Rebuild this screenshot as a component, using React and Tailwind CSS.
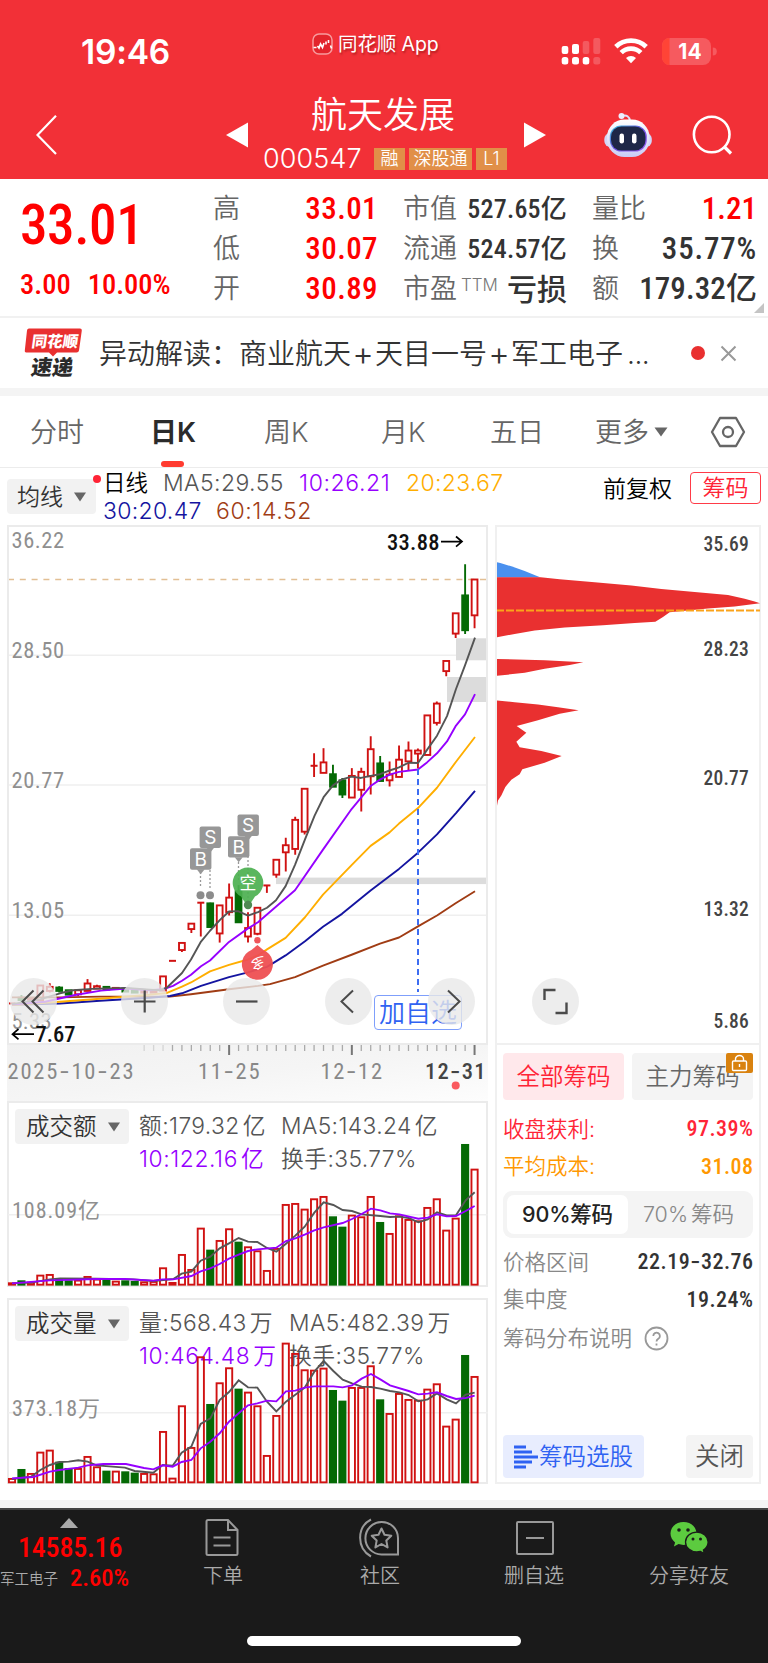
// pages/StockDetail

const SANS = "[font-family:'Inter','Noto_Sans_CJK_SC',sans-serif]";
const DIN = "[font-family:'Roboto_Condensed','Noto_Sans_CJK_SC',sans-serif]";

const RED = '#d01212';
const GREEN = '#056a05';

// candle columns are evenly spaced across the plot
const colX = (i) => 12 + i * 9.44;
const priceY = (v) => 520 + v / 2.958;

// [up, high, bodyTop, bodyBottom, low]
const candles = [
  [1, 1430, 1430, 1430, 1430],
  [0, 1405, 1413, 1420, 1425],
  [1, 1412, 1414, 1419, 1420],
  [1, 1377, 1377, 1421, 1421],
  [1, 1370, 1381, 1393, 1398],
  [0, 1379, 1383, 1393, 1398],
  [0, 1391, 1391, 1404, 1404],
  [1, 1391, 1391, 1403, 1408],
  [1, 1358, 1371, 1393, 1393],
  [1, 1375, 1379, 1386, 1386],
  [0, 1381, 1381, 1389, 1389],
  [1, 1384, 1384, 1387, 1387],
  [0, 1386, 1386, 1395, 1395],
  [0, 1392, 1392, 1398, 1398],
  [1, 1394, 1394, 1398, 1398],
  [1, 1394, 1394, 1398, 1398],
  [1, 1350, 1350, 1392, 1392],
  [1, 1304, 1304, 1304, 1304],
  [1, 1250, 1251, 1272, 1278],
  [1, 1193, 1194, 1210, 1222],
  [1, 1132, 1132, 1132, 1232],
  [0, 1132, 1134, 1204, 1204],
  [1, 1140, 1140, 1223, 1250],
  [1, 1075, 1117, 1160, 1170],
  [0, 1080, 1098, 1190, 1190],
  [1, 1160, 1207, 1232, 1250],
  [1, 1146, 1147, 1224, 1228],
  [1, 1081, 1081, 1081, 1103],
  [1, 1004, 1005, 1049, 1058],
  [1, 940, 962, 983, 1040],
  [1, 878, 887, 973, 990],
  [1, 794, 795, 922, 930],
  [1, 690, 727, 727, 760],
  [1, 675, 717, 748, 748],
  [0, 724, 752, 789, 789],
  [0, 763, 770, 812, 822],
  [1, 734, 757, 821, 821],
  [1, 733, 745, 798, 862],
  [1, 640, 678, 758, 812],
  [0, 698, 720, 772, 772],
  [1, 714, 753, 770, 788],
  [1, 667, 709, 760, 760],
  [1, 655, 682, 714, 740],
  [1, 676, 682, 691, 735],
  [1, 577, 578, 695, 695],
  [1, 537, 543, 600, 608],
  [1, 416, 417, 447, 462],
  [1, 275, 276, 336, 349],
  [0, 131, 223, 326, 337],
  [1, 175, 176, 282, 320],
];

const averages = [
  ['#a03c14', [12, 1412, 60, 1412, 100, 1410, 170, 1410, 191, 1403, 229, 1388, 258, 1378, 270, 1373, 295, 1352, 323, 1318, 351.6, 1286, 380, 1253, 399, 1235, 418, 1202, 437, 1170, 456, 1133, 475, 1098]],
  ['#1414a0', [12, 1434, 60, 1430, 100, 1422, 150, 1413, 170, 1408, 182, 1400, 201, 1378, 229, 1352, 248, 1338, 267, 1322, 285.6, 1288, 305, 1246, 323, 1203, 342, 1165, 370.6, 1096, 399, 1032, 418, 984, 437, 930, 456, 867, 475, 801]],
  ['#ffae00', [12, 1435, 60, 1425, 100, 1416, 150, 1404, 167, 1399, 182, 1380, 191, 1368, 210, 1335, 229, 1316, 248, 1300, 258, 1288, 267, 1270, 285.6, 1236, 305, 1175, 323, 1108, 351.6, 1021, 370.6, 964, 389.6, 924, 399, 898, 418, 852, 437, 792, 456, 715, 475, 642]],
  ['#9600ff', [12, 1433, 45, 1425, 75, 1405, 101, 1392, 126, 1386, 150, 1391, 163, 1388, 173, 1378, 182, 1363, 191, 1345, 201, 1320, 210, 1303, 229, 1248, 248, 1208, 258, 1190, 295, 1095, 323, 975, 351.6, 855, 370.6, 787, 380, 768, 389.6, 753, 399, 745, 418, 738, 427, 717, 437, 690, 447, 655, 456, 608, 465, 575, 475, 515]],
  ['#555555', [12, 1432, 40, 1418, 60, 1400, 73, 1391, 92, 1387, 126, 1384, 150, 1389, 160, 1391, 167, 1383, 182, 1340, 191, 1300, 201, 1247, 210, 1215, 220, 1183, 229, 1158, 238, 1157, 248, 1170, 258, 1160, 267, 1147, 276, 1125, 285.6, 1083, 295, 1020, 305, 945, 314.5, 875, 323.6, 820, 333, 785, 342, 767, 351.6, 759, 361, 763, 370.6, 757, 380, 752, 389.6, 741, 399, 732, 408.6, 718, 418, 719, 427, 680, 437, 638, 447, 580, 456, 500, 465, 430, 475, 348]],
];

const turnover = {
  base: 914,
  tops: [908, 902, 906, 885, 883, 898, 902, 900, 889, 897, 898, 903, 902, 904, 905, 904, 863, 907, 823, 868, 744, 810, 781, 746, 786, 800, 812, 871, 805, 673, 670, 687, 656, 649, 710, 741, 705, 710, 649, 727, 760, 707, 718, 722, 682, 656, 750, 714, 493, 567],
  ma5: [36, 910, 93, 908, 150, 898, 180, 895, 290, 896, 400, 898, 460, 903, 520, 897, 545, 881, 574, 875, 602, 842, 631, 830, 659, 805, 687, 790, 716, 774, 744, 785, 772, 786, 801, 804, 829, 815, 858, 791, 886, 767, 914, 740, 943, 698, 971, 667, 1000, 675, 1028, 690, 1056, 693, 1085, 703, 1141, 708, 1170, 711, 1198, 710, 1226, 714, 1255, 727, 1283, 718, 1311, 697, 1340, 706, 1368, 706, 1397, 661, 1424, 637],
  ma10: [36, 910, 150, 901, 290, 897, 375, 897, 460, 902, 488, 898, 520, 898, 574, 888, 602, 874, 631, 865, 659, 852, 687, 836, 716, 824, 744, 813, 772, 808, 829, 803, 858, 783, 886, 775, 914, 764, 943, 751, 971, 742, 1028, 729, 1056, 717, 1085, 702, 1113, 686, 1141, 691, 1170, 700, 1198, 703, 1255, 716, 1283, 713, 1311, 703, 1340, 709, 1368, 708, 1397, 693, 1424, 678],
};

const volume = {
  base: 577,
  tops: [565, 538, 550, 486, 480, 516, 535, 535, 499, 530, 543, 543, 545, 549, 550, 551, 424, 564, 347, 472, 200, 343, 278, 233, 297, 306, 347, 496, 376, 159, 190, 239, 240, 234, 301, 333, 292, 292, 227, 329, 370, 310, 328, 330, 297, 281, 408, 387, 196, 259],
  ma5: [36, 567, 93, 560, 121, 540, 150, 525, 178, 516, 206, 515, 235, 511, 263, 515, 290, 526, 375, 533, 404, 543, 460, 548, 488, 525, 518, 527, 545, 488, 574, 470, 602, 402, 631, 385, 659, 330, 687, 306, 716, 271, 744, 292, 772, 293, 801, 335, 829, 364, 858, 335, 914, 293, 943, 245, 971, 213, 1000, 243, 1028, 269, 1056, 280, 1085, 290, 1113, 291, 1141, 296, 1170, 303, 1198, 307, 1226, 315, 1255, 334, 1283, 328, 1311, 310, 1340, 328, 1368, 340, 1397, 314, 1424, 308],
  ma10: [36, 565, 100, 561, 150, 545, 178, 540, 235, 533, 263, 526, 310, 522, 378, 522, 432, 534, 460, 538, 488, 526, 518, 530, 545, 516, 574, 510, 602, 475, 631, 455, 659, 430, 687, 395, 716, 370, 744, 346, 772, 340, 801, 332, 829, 334, 858, 304, 886, 302, 914, 293, 943, 289, 1000, 289, 1028, 292, 1056, 286, 1085, 266, 1113, 252, 1141, 268, 1170, 286, 1226, 303, 1255, 313, 1283, 311, 1311, 307, 1340, 318, 1368, 327, 1397, 324, 1424, 317],
};

const chips = [
  ['#4a90ee', '26,125 37,127 70,137 110,151 158,170 26,170'],
  ['#e93030', '26,169 158,169 215,175 320,184 430,194 520,204 620,213 720,222 770,233 800,241 816,246 740,256 660,262 545,273 525,287 502,301 440,305 345,311 230,318 140,327 80,337 26,347'],
  ['#e93030', '26,411 170,415 286,421 245,429 170,440 110,452 26,461'],
  ['#e93030', '26,534 80,539 150,546 210,554 272,563 215,573 150,592 86,609 115,629 85,656 95,672 160,683 221,698 170,718 103,737 95,752 70,768 52,790 40,815 30,830 26,850'],
];

function toPoints(list, fx, fy) {
  const out = [];
  for (let i = 0; i < list.length; i += 2) out.push(`${fx(list[i])},${fy(list[i + 1])}`);
  return out.join(' ');
}

function StatusBar() {
  return (
    <div className="flex h-[40px] items-center pl-[81px]">
      <div className="w-[231px] text-[33.5px] leading-[40px] font-semibold tracking-[-0.2px]">19:46</div>
      <div className="-mt-[16px] flex w-[249px] items-center gap-[5px]">
        <svg width="21" height="22" viewBox="0 0 21 22" fill="none">
          <rect x="1" y="1" width="19" height="20" rx="6" fill="#e3242c" stroke="#f79a9d" strokeWidth="1.5" />
          <path d="M1.500 14.500h3M5.500 13l1.500 2 1.500-4 2 3.500 1.500-4.500M14 11.500v-3M16.500 10V7M18.500 12.500l1 3" stroke="#fff" strokeWidth="1.600" />
        </svg>
        <span className="text-[19.500px] leading-[24px] tracking-[-0.1px] [text-shadow:1px_2px_2px_rgba(90,0,0,0.4)]">同花顺 App</span>
      </div>
      <svg width="160" height="28" viewBox="0 0 160 28" fill="#fff">
        <rect x="0.700" y="8" width="6.600" height="8" rx="2" />
        <rect x="11" y="6" width="7" height="10" rx="2" />
        <rect x="21.700" y="3" width="6.600" height="13" rx="2" opacity=".2" />
        <rect x="32.300" y="0" width="7" height="16" rx="2" opacity=".2" />
        <rect x="0.700" y="19" width="6.600" height="7.500" rx="2.500" />
        <rect x="11" y="19" width="7" height="7.500" rx="2.500" />
        <rect x="21.700" y="19" width="6.600" height="7.500" rx="2.500" />
        <rect x="32.300" y="19" width="7" height="7.500" rx="2.500" opacity=".2" />
        <g fill="none" stroke="#fff" strokeWidth="4.800">
          <path d="M54.800 8.800a22 22 0 0 1 30.400 0" />
          <path d="M60.200 14.600a14 14 0 0 1 19.600 0" />
        </g>
        <path d="M70 25.200l-5-5.200a7.500 7.500 0 0 1 10 0z" />
        <rect x="101" y="0" width="49" height="27" rx="8" fill="#f65a5f" />
        <path d="M108.500 0h-0.500a7 8 0 0 0-7 8v11a7 8 0 0 0 7 8h.5z" fill="#ff4436" />
        <path d="M151.800 9.500a4 4 0 0 1 0 8z" fill="#f65a5f" />
        <text x="129" y="21.200" textAnchor="middle" className="text-[21px] font-bold">14</text>
      </svg>
    </div>
  );
}

function Robot() {
  return (
    <svg className="ml-[56px]" width="52" height="46" viewBox="0 0 52 46">
      <defs>
        <linearGradient id="shell" x1="0" y1="0" x2="0" y2="1">
          <stop offset="0" stopColor="#ffffff" />
          <stop offset="1" stopColor="#c9ccf5" />
        </linearGradient>
        <linearGradient id="rim" x1="0" y1="0" x2="1" y2="1">
          <stop offset="0" stopColor="#35c3d8" />
          <stop offset=".5" stopColor="#6a4fe0" />
          <stop offset="1" stopColor="#9a5cf0" />
        </linearGradient>
      </defs>
      <path d="M20 4q7-2 8 5" fill="none" stroke="#dfe0fa" strokeWidth="2" />
      <circle cx="19.500" cy="4" r="3" fill="#eceefe" />
      <rect x="2.300" y="21" width="47.500" height="14" rx="6" fill="#d3d6f8" />
      <rect x="5" y="7.500" width="42.500" height="37.500" rx="17.500" fill="url(#shell)" />
      <rect x="7.800" y="13.500" width="37" height="26" rx="11.500" fill="url(#rim)" />
      <rect x="9" y="14.500" width="34.500" height="24" rx="10.500" fill="#1e2747" />
      <rect x="17.500" y="21.500" width="4.500" height="10" rx="2.200" fill="#fff" />
      <rect x="30" y="21.500" width="4.500" height="10" rx="2.200" fill="#fff" />
    </svg>
  );
}

function Header() {
  return (
    <header className="h-[179px] bg-[#f23037] pt-[32px] text-white">
      <StatusBar />
      <div className="flex h-[125px] items-center pl-[36px]">
        <svg width="21" height="40" viewBox="0 0 21 40" fill="none" stroke="#fff" strokeWidth="2.200">
          <path d="M20 0.800L1.500 20L20 39" />
        </svg>
        <svg className="ml-[169px]" width="22" height="26" viewBox="0 0 22 26" fill="#fff">
          <path d="M22 0.500v25L0 13z" />
        </svg>
        <div className="ml-[14px] w-[247px]">
          <div className="-ml-[5px] text-center text-[36px] leading-[44px] font-[350]">航天发展</div>
          <div className="mt-[4px] flex h-[36px] items-center">
            <span className="ml-[1px] w-[111px] text-[27px] leading-[36px] font-[350] tracking-[0.1px]">000547</span>
            <span className="mr-[4px] h-[22px] w-[31px] bg-[#e18f48] text-center text-[18px] leading-[21px] font-[350]">融</span>
            <span className="mr-[4px] h-[22px] w-[63px] bg-[#e18f48] text-center text-[18px] leading-[21px] font-[350]">深股通</span>
            <span className="h-[22px] w-[31px] bg-[#e18f48] text-center text-[18px] leading-[21px] font-[350]">L1</span>
          </div>
        </div>
        <svg className="ml-[15px]" width="22" height="26" viewBox="0 0 22 26" fill="#fff">
          <path d="M0 0.500v25L22 13z" />
        </svg>
        <Robot />
        <svg className="ml-[36px]" width="44" height="44" viewBox="0 0 44 44" fill="none" stroke="#fff" strokeWidth="2.600">
          <circle cx="21.700" cy="21.500" r="17.800" />
          <path d="M34 33.500l7 7" strokeWidth="3.200" />
        </svg>
      </div>
    </header>
  );
}

const quoteCols = [
  { box: 'w-[165px] ml-[42px]', rows: [['高', '33.01'], ['低', '30.07'], ['开', '30.89']] },
  { box: 'w-[164px] ml-[25px]', rows: [['市值', '527.65亿'], ['流通', '524.57亿'], ['市盈', '亏损']] },
  { box: 'w-[165px] ml-[25px]', rows: [['量比', '1.21'], ['换', '35.77%'], ['额', '179.32亿']] },
];

function valueClass(col, row) {
  if (col === 0) return `${DIN} text-[31px] font-medium tracking-[0.4px] text-[#ff0000]`;
  if (col === 2) return `${DIN} text-[31px] font-medium ${row === 0 ? 'text-[#ff0000]' : row === 1 ? 'tracking-[0.8px] text-[#333]' : 'tracking-[0.1px] text-[#333]'}`;
  return row === 2 ? 'text-[30px] font-medium text-[#333]' : `${DIN} text-[26px] font-medium tracking-[0.2px] text-[#333]`;
}

function Quote() {
  return (
    <section className="relative flex h-[139px] border-b-2 border-[#f1f1f1] pl-[20px]">
      <div className={`${DIN} w-[151px] font-medium text-[#ff0000]`}>
        <div className="pt-[16px] text-[55px] leading-[60px] tracking-[-0.4px]">33.01</div>
        <div className="mt-[12px] flex gap-[17px] text-[28.5px] leading-[36px]">
          <span>3.00</span>
          <span>10.00%</span>
        </div>
      </div>
      {quoteCols.map((col, c) => (
        <div key={c} className={`${col.box} flex flex-col pt-[10px]`}>
          {col.rows.map(([label, value], r) => (
            <div key={label} className="flex h-[40px] items-center justify-between">
              <span className="text-[27px] leading-[40px] font-[350] text-[#666]">
                {label}
                {label === '市盈' && <sup className="top-[-7px] ml-[4px] text-[17px] text-[#777]">TTM</sup>}
              </span>
              <span className={`${valueClass(c, r)} leading-[40px]`}>{value}</span>
            </div>
          ))}
        </div>
      ))}
      <svg className="absolute right-[4px] bottom-[3px]" width="10" height="10" viewBox="0 0 10 10" fill="#c4c4c4">
        <path d="M10 0v10H0z" />
      </svg>
    </section>
  );
}

function News() {
  return (
    <section className="flex h-[70px] items-center pl-[24px]">
      <svg width="60" height="52" viewBox="0 0 60 52">
        <path d="M5 1.500h51q2 0 1.800 2L55 23.500q-.3 2-2.500 2H33l-4 4-4-4H3q-2.500 0-2.200-2L3 3.500q.2-2 2-2z" fill="#e93030" />
        <text x="30" y="20" textAnchor="middle" transform="translate(3 0) skewX(-8)" className="text-[15.5px] font-black" fill="#fff">同花顺</text>
        <text x="30" y="48.500" textAnchor="middle" transform="translate(4 0) skewX(-8)" className="text-[21px] font-black" fill="#2b2b2b">速递</text>
      </svg>
      <div className="mt-[2px] ml-[15px] flex w-[592px] text-[28px] leading-[40px] font-[350] text-[#333]">
        <span>异动解读：商业航天</span>
        <span className="-mt-[1px] w-[24px] text-center text-[33px]">+</span>
        <span>天目一号</span>
        <span className="-mt-[1px] w-[24px] text-center text-[33px]">+</span>
        <span>军工电子</span>
        <span className="ml-[4px] tracking-[-0.5px]">...</span>
      </div>
      <i className="h-[14px] w-[14px] rounded-full bg-[#e93030]" />
      <svg className="ml-[15px]" width="17" height="17" viewBox="0 0 17 17" stroke="#999" strokeWidth="2">
        <path d="M1.500 1.500l14 14M15.500 1.500l-14 14" />
      </svg>
    </section>
  );
}

function Tabs() {
  return (
    <nav className="flex h-[72px] items-center border-b border-[#ececec] pt-[2px] pl-[30px] text-[27px] leading-[40px] font-[350] text-[#666]">
      <span className="w-[120px]">分时</span>
      <span className="relative w-[114px] font-semibold text-[#2b2b2b]">
        日K
        <i className="absolute top-[48px] left-[11px] h-[6px] w-[23px] rounded-[3px] bg-[#ff3b30]" />
      </span>
      <span className="w-[117px]">周K</span>
      <span className="w-[109px]">月K</span>
      <span className="w-[105px]">五日</span>
      <span>更多</span>
      <svg className="-mt-[2px] ml-[5px]" width="14" height="10" viewBox="0 0 14 10" fill="#666">
        <path d="M0.500 0.500h13L7 9.500z" />
      </svg>
      <svg className="-mt-[2px] ml-[42px]" width="36" height="32" viewBox="0 0 36 32" fill="none" stroke="#666" strokeWidth="2.300">
        <path d="M10 2h16l8 14-8 14H10L2 16z" strokeLinejoin="round" />
        <circle cx="18" cy="16" r="5" />
      </svg>
    </nav>
  );
}

function Caret() {
  return (
    <svg width="12" height="10" viewBox="0 0 12 10" fill="#666">
      <path d="M0 0.500h12L6 9.500z" />
    </svg>
  );
}

function Legend() {
  return (
    <div className="flex h-[57px] items-start pl-[7px] text-[23px] leading-[28px] font-[350]">
      <div className="relative mt-[11px] flex h-[35px] w-[89px] items-center gap-[11px] rounded-[4px] bg-[#f2f2f2] pl-[10px] text-[#333]">
        均线
        <Caret />
        <i className="absolute -top-[4px] -right-[5px] h-[8px] w-[8px] rounded-full bg-[#ff2436]" />
      </div>
      <div className="ml-[7px] w-[500px] pt-[1px]">
        <div className="flex">
          <span className="w-[60px] text-[22.5px] text-black">日线</span>
          <span className="w-[136px] tracking-[0.4px] text-[#555]">MA5:29.55</span>
          <span className="w-[107px] tracking-[0.6px] text-[#9600ff]">10:26.21</span>
          <span className="tracking-[0.3px] text-[#ffae00]">20:23.67</span>
        </div>
        <div className="flex">
          <span className="w-[113px] tracking-[0.3px] text-[#1414a0]">30:20.47</span>
          <span className="tracking-[0.6px] text-[#a03c14]">60:14.52</span>
        </div>
      </div>
      <span className="mt-[7px] w-[87px] text-black">前复权</span>
      <span className="mt-[4px] h-[32px] w-[71px] rounded-[4px] border border-[#ff3b48] text-center leading-[30px] text-[#ff2436]">筹码</span>
    </div>
  );
}

function Flag({ x, y, children }) {
  return (
    <g>
      <rect x={x - 10.7} y={y} width="21.400" height="21.400" rx="2" fill="#979797" />
      <path d={`M${x - 4} ${y + 21}h8l-4 5z`} fill="#979797" />
      <text x={x} y={y + 17.5} textAnchor="middle" fill="#fff" className="text-[19px]">{children}</text>
    </g>
  );
}

function KLine() {
  return (
    <svg className="block" width="482" height="520" viewBox="7 525 482 520" fill="none">
      <g stroke="#efefef" strokeWidth="1.500">
        <path d="M8 655.200h480M8 785h480M8 915.200h480" />
      </g>
      <g fill="#dcdcdc">
        <rect x="456" y="638.300" width="31" height="22" />
        <rect x="447" y="677" width="40" height="25" />
        <rect x="276" y="877.600" width="211" height="6.500" />
      </g>
      <path d="M8 579.500h479" stroke="#e2bf94" strokeWidth="1.500" strokeDasharray="6 5.800" />
      <g className={DIN + ' text-[22.5px]'} fill="#8f8f8f">
        <text x="11.500" y="547.500" textLength="52.500">36.22</text>
        <text x="11.500" y="658" textLength="52.500">28.50</text>
        <text x="11.500" y="787.500" textLength="52.500">20.77</text>
        <text x="11.500" y="918" textLength="52.500">13.05</text>
        <text x="11.500" y="1029" textLength="40">5.33</text>
      </g>
      {candles.map(([up, high, top, bottom, low], i) => {
        const x = colX(i);
        const color = up ? RED : GREEN;
        const flat = bottom - top < 1;
        return (
          <g key={i} stroke={color} strokeWidth="1.900">
            <path d={`M${x} ${priceY(high)}V${priceY(top)}M${x} ${priceY(bottom)}V${priceY(low)}`} />
            {flat ? (
              <path d={`M${x - 3.5} ${priceY(top)}h7`} strokeWidth="2" />
            ) : (
              <rect x={x - 2.9} y={priceY(top)} width="5.800" height={priceY(bottom) - priceY(top)} fill={up ? '#fff' : color} />
            )}
          </g>
        );
      })}
      {averages.map(([color, list]) => (
        <polyline key={color} points={toPoints(list, (v) => v, priceY)} stroke={color} strokeWidth="1.900" strokeLinejoin="round" />
      ))}
      <g stroke="#999" strokeWidth="1.300" strokeDasharray="2 2">
        <path d="M200.500 872v16M210 850v40M238.500 858v22M248 836v66" />
      </g>
      <g fill="#8c8c8c">
        <circle cx="200.500" cy="895.300" r="4" />
        <circle cx="210" cy="895.300" r="4" />
      </g>
      <Flag x={200.7} y={848.3}>B</Flag>
      <Flag x={210.3} y={826.6}>S</Flag>
      <Flag x={238.7} y={836.2}>B</Flag>
      <Flag x={248.2} y={814.5}>S</Flag>
      <path d="M248 907l-7-10.500a15.300 15.300 0 1 1 14 0z" fill="#4cb050" fillOpacity=".92" />
      <circle cx="248" cy="905" r="4.200" fill="#4f8a52" />
      <text x="248" y="889" textAnchor="middle" fill="#fff" className="text-[17px]">空</text>
      <circle cx="257.400" cy="940.200" r="3.200" fill="#f0555a" />
      <path d="M257.400 945l6 5a15.500 15.500 0 1 1-12 0z" fill="#ee4f52" fillOpacity=".95" />
      <text x="257.400" y="969" textAnchor="middle" fill="#fff" className="text-[14px]" transform="rotate(180 257.400 963.500)">多</text>
      <path d="M418 769V992" stroke="#3d6df2" strokeWidth="2" strokeDasharray="6 4" />
      <g stroke="#000" strokeWidth="1.700">
        <path d="M441 541.600h20.500M456 536.500l6 5.100-6 5.100" />
        <path d="M34 1034.200H13M18.500 1029l-6 5.200 6 5.200" />
      </g>
      <g fill="#111" className={DIN + ' text-[22.5px] font-medium'}>
        <text x="387" y="549.500" textLength="52.500">33.88</text>
        <text x="35.500" y="1041.500" textLength="40">7.67</text>
      </g>
    </svg>
  );
}

function RoundButton({ className = '', children }) {
  return (
    <span className={`flex h-[47px] w-[47px] items-center justify-center rounded-full bg-[#e9e9e9]/80 ${className}`}>
      <svg width="47" height="47" viewBox="0 0 47 47" fill="none" stroke="#4a4a4a" strokeWidth="2">
        {children}
      </svg>
    </span>
  );
}

function ChartPanel() {
  return (
    <div className="relative h-[520px] w-[481px]">
      <KLine />
      <div className="absolute inset-0 border-2 border-[#ebebeb]" />
      <span className="absolute top-[470px] left-[367px] h-[35px] w-[88px] rounded-[4px] border-[1.5px] border-[#7f9ffb] bg-white text-center text-[26px] leading-[34px] font-[350] text-[#2f62f2]">
        加自选
      </span>
      <div className="absolute top-[453px] left-[3px] flex">
        <RoundButton>
          <path d="M23.500 12.500L12.500 23.500L23.500 34.500M33.500 12.500L22.500 23.500L33.500 34.500" />
        </RoundButton>
        <RoundButton className="ml-[64px]">
          <path d="M13 23.500h21.500M23.700 12.500v22" strokeWidth="2.200" />
        </RoundButton>
        <RoundButton className="ml-[55px]">
          <path d="M13 23.500h21.500" strokeWidth="2.200" />
        </RoundButton>
        <RoundButton className="ml-[55px]">
          <path d="M28 12.500L16.500 23.500L28 34.500" />
        </RoundButton>
        <RoundButton className="ml-[56px]">
          <path d="M20 12.500L31.500 23.500L20 34.500" />
        </RoundButton>
      </div>
    </div>
  );
}

// Roboto's hyphen is too short for dates and ranges
function Dashed({ value, svg }) {
  const Tag = svg ? 'tspan' : 'span';
  return value.split(/(-)/).map((part, i) => (
    part === '-' ? <Tag key={i} className="[font-family:Inter,sans-serif]">-</Tag> : part
  ));
}

function DateAxis() {
  const ticks = [];
  for (let i = 14; i < 50; i++) ticks.push(i);
  return (
    <div className="relative h-[56px] w-[481px] bg-gradient-to-br from-[#f1f1f1] via-[#f5f5f5] to-[#fdfdfd]">
      <svg className="block" width="481" height="56" viewBox="7 1045 481 56">
        {ticks.map((i) => {
          const major = i === 23 || i === 36 || i === 49;
          return <path key={i} d={`M${colX(i)} 1045v${major ? 10 : 6}`} stroke={major ? '#777' : '#aaa'} strokeWidth={major ? 2 : 1.3} opacity={i < 17 ? 0.4 : 1} />;
        })}
        <g className={DIN + ' text-[22.5px]'} fill="#888">
          <text x="7.500" y="1079" textLength="126"><Dashed svg value="2025-10-23" /></text>
          <text x="198" y="1079" textLength="61.500"><Dashed svg value="11-25" /></text>
          <text x="320.500" y="1079" textLength="61.500"><Dashed svg value="12-12" /></text>
          <text x="425" y="1079" textLength="60.500" fill="#444" className="font-medium"><Dashed svg value="12-31" /></text>
        </g>
        <circle cx="455.700" cy="1085.600" r="4" fill="#fa5a5f" />
      </svg>
    </div>
  );
}

function Amount({ className = '', value }) {
  const unit = value.match(/[亿万]$/);
  return (
    <span className={className}>
      {unit ? value.slice(0, -1) : value}
      {unit && <span className="ml-[3px]">{unit[0]}</span>}
    </span>
  );
}

function VolumePanel({ name, data, top, offset, gridY, axis, items, col, className = '' }) {
  const y = (v) => offset + v / 3;
  const third = (v) => v / 3;
  return (
    <div className={`relative w-[481px] ${className}`}>
      <div className="absolute inset-0 border-2 border-[#ebebeb]" />
      <div className="flex pt-[8px] pl-[8px] text-[22.800px] leading-[33px] font-[350]">
        <div className="flex h-[35px] w-[114px] items-center gap-[11px] rounded-[4px] bg-[#f2f2f2] pl-[11px] text-[23.5px] text-[#333]">
          {name}
          <Caret />
        </div>
        <div className="ml-[10px] flex flex-col tracking-[0.4px] text-[#555]">
          <div className="flex">
            <Amount className={col} value={items[0]} />
            <Amount value={items[1]} />
          </div>
          <div className="flex">
            <Amount className={`${col} tracking-[0.6px] text-[#9600ff]`} value={items[2]} />
            <Amount value={items[3]} />
          </div>
        </div>
      </div>
      <svg className="absolute inset-0" width="481" height="186" viewBox={`7 ${top} 481 186`} fill="none">
        <path d={`M8 ${gridY}h480`} stroke="#efefef" strokeWidth="1.500" />
        <text x="12" y={gridY + 3} textLength="88" fill="#8f8f8f" className={DIN + ' text-[22px]'}>{axis}</text>
        {data.tops.map((v, i) => {
          const up = candles[i][0];
          const color = up ? RED : GREEN;
          return (
            <rect key={i} x={colX(i) - 3.1} y={y(v) + 0.6} width="6.200" height={Math.max(y(data.base) - y(v) - 0.6, 1)} stroke={color} strokeWidth="1.900" fill={up ? 'none' : color} />
          );
        })}
        <polyline points={toPoints(data.ma5, third, y)} stroke="#555" strokeWidth="1.900" />
        <polyline points={toPoints(data.ma10, third, y)} stroke="#9600ff" strokeWidth="1.900" />
      </svg>
    </div>
  );
}

function ChipChart() {
  const px = (pts) => pts.split(' ').map((p) => {
    const [a, b] = p.split(',');
    return `${488 + a / 3},${priceY(Number(b))}`;
  }).join(' ');
  const labels = [['35.69', 551], ['28.23', 655.6], ['20.77', 785], ['13.32', 915.5], ['5.86', 1027.5]];
  return (
    <div className="relative h-[520px] border-b-2 border-[#f0f0f0]">
      <svg className="block" width="263" height="518" viewBox="497 525 263 518" fill="none">
        {chips.map(([color, pts]) => <polygon key={pts} points={px(pts)} fill={color} />)}
        <path d="M496 610.500h264" stroke="#fba31a" strokeWidth="2" strokeDasharray="8 2" />
        {labels.map(([t, y]) => (
          <text key={t} x="749" y={y} textAnchor="end" fill="#444" className={DIN + ' text-[19.5px] font-medium tracking-[0.2px]'}>{t}</text>
        ))}
      </svg>
      <RoundButton className="absolute top-[453px] left-[34.500px]">
        <path d="M12.500 22V12h11M34.500 24.500V35h-11" strokeWidth="2.400" />
      </RoundButton>
    </div>
  );
}

function ChipRow({ label, value, className = 'text-[#888]', valueColor = '' }) {
  return (
    <div className={`flex h-[37.500px] items-center justify-between text-[21.5px] font-[350] ${className}`}>
      <span>{label}</span>
      <span className={`${DIN} -mr-[0.5px] text-[22px] font-medium tracking-[0.5px] ${valueColor}`}>
        <Dashed value={value} />
      </span>
    </div>
  );
}

function ChipPanel() {
  return (
    <div className="flex h-[959px] w-[266px] flex-col border-2 border-[#f0f0f0]">
      <div className="-mt-[2px]">
        <ChipChart />
      </div>
      <div className="flex flex-1 flex-col pr-[6px] pl-[6px]">
        <div className="mt-[8px] flex justify-between text-[23.5px] leading-[47px] font-[350]">
          <span className="h-[47px] w-[121px] rounded-[4px] bg-[#ffe8eb] text-center text-[#ff2436]">全部筹码</span>
          <span className="relative h-[47px] w-[121px] rounded-[4px] bg-[#f4f4f4] text-center text-[#666]">
            主力筹码
            <svg className="absolute top-0 right-0" width="27" height="20" viewBox="0 0 27 20" fill="none" stroke="#fff" strokeWidth="1.400">
              <rect width="27" height="20" rx="2" fill="#d9820f" stroke="none" />
              <rect x="6.500" y="8" width="14" height="9.500" rx="1" />
              <path d="M9.500 8V6a4 3.500 0 0 1 8 0v2M13.500 11v3" />
            </svg>
          </span>
        </div>
        <ChipRow className="mt-[10px] text-[#ff2436]" label="收盘获利:" value="97.39%" />
        <ChipRow className="text-[#ff9800]" label="平均成本:" value="31.08" />
        <div className="mt-[6px] flex h-[47px] rounded-[9px] bg-[#f4f4f4] p-[4px] text-[21.5px] leading-[39px]">
          <span className="w-[121px] rounded-[7px] bg-white text-center font-medium tracking-[-0.2px] text-[#222]">90%筹码</span>
          <span className="w-[121px] text-center font-[350] text-[#888]">70%<span className="ml-[3px]">筹码</span></span>
        </div>
        <div className="mt-[5px]">
          <ChipRow label="价格区间" value="22.19-32.76" valueColor="text-[#333]" />
          <ChipRow label="集中度" value="19.24%" valueColor="text-[#333]" />
          <div className="flex h-[40px] items-center text-[21.5px] font-[350] text-[#888]">
            筹码分布说明
            <svg className="ml-[12px]" width="25" height="25" viewBox="0 0 25 25" fill="none" stroke="#999" strokeWidth="1.800">
              <circle cx="12.500" cy="12.500" r="11" />
              <path d="M9.300 10a3.300 3.300 0 1 1 5 2.800c-1.200.8-1.800 1.300-1.800 2.700M12.500 17.500v2" />
            </svg>
          </div>
        </div>
        <div className="mt-auto mb-[4px] flex h-[43px] justify-between leading-[43px] font-[350]">
          <span className="flex w-[141px] items-center rounded-[4px] bg-[#e8edfe] pl-[11px] text-[23.5px] text-[#2f62f2]">
            <svg width="25" height="24" viewBox="0 0 25 24" stroke="#2f62f2" strokeWidth="3">
              <path d="M0 2h12M0 7h18M0 12h24M0 17h18M0 22h12" />
            </svg>
            筹码选股
          </span>
          <span className="w-[67px] rounded-[4px] bg-[#f4f4f4] text-center text-[24.5px] text-[#555]">关闭</span>
        </div>
      </div>
    </div>
  );
}

function FooterItem({ className, iconClass = '', label, children }) {
  return (
    <div className={`flex w-[100px] flex-col items-center pt-[8px] ${className}`}>
      <svg className={iconClass} width="44" height="40" viewBox="0 0 44 40" fill="none" stroke="#999" strokeWidth="2">
        {children}
      </svg>
      <span className="mt-[4px]">{label}</span>
    </div>
  );
}

function Footer() {
  return (
    <footer className="h-[155px] border-t-2 border-[#444] bg-[#1a1a1a] text-[#aaa]">
      <div className="flex h-[126px] text-[20px] leading-[28px] font-[350]">
        <div className={`${DIN} w-[150px] pt-[8px] font-medium text-[#ff0000]`}>
          <svg className="ml-[60px]" width="18" height="10" viewBox="0 0 18 10" fill="#aaa">
            <path d="M9 0l9 10H0z" />
          </svg>
          <div className="mt-[3px] ml-[18px] text-[28px] leading-[34px] tracking-[-0.2px]">14585.16</div>
          <div className="-mt-[4px] flex items-center leading-[30px]">
            <span className="w-[70px] pt-[4px] text-[14.5px] font-[350] text-[#aaa]">军工电子</span>
            <span className="text-[24.500px]">2.60%</span>
          </div>
        </div>
        <FooterItem className="ml-[23px]" iconClass="-ml-[3px]" label="下单">
          <path d="M28 2H8Q6.500 2 6.500 3.500v32Q6.500 37 8 37h28q1.500 0 1.500-1.500V12z" />
          <path d="M28 2v10h9.500M13.500 19.500h17M13.500 27.500h17" />
        </FooterItem>
        <FooterItem className="ml-[57px]" iconClass="-ml-[3px]" label="社区">
          <path d="M41 36.500H24.500a16.300 16.300 0 1 1 16.500-16.500z" />
          <path d="M14 1.500C-0.500 9 -0.500 30.500 14 38.500" />
          <path d="M24.500 10.500l3 6.300 6.800.9-5 4.800 1.300 6.900-6.100-3.400-6.100 3.400 1.300-6.900-5-4.800 6.800-.9z" strokeLinejoin="round" />
        </FooterItem>
        <FooterItem className="ml-[54px]" iconClass="ml-[2px]" label="删自选">
          <rect x="4" y="4" width="36" height="32" rx="1" />
          <path d="M13 20h18" />
        </FooterItem>
        <FooterItem className="ml-[55px]" label="分享好友">
          <g stroke="none" fill="#5ccb3f" transform="translate(2 0)">
            <path d="M14.500 4C7 4 1.500 9.200 1.500 15.600c0 3.600 1.800 6.700 4.600 8.900l-1.200 4 4.700-2.400c1.500.5 3.200.8 4.900.8C22 26.900 27.500 22 27.500 15.600S22 4 14.500 4z" />
            <path d="M27.800 14.200c-6.300 0-11.300 4.300-11.300 9.800 0 5.600 5 9.900 11.300 9.900 1.300 0 2.500-.2 3.600-.5l4 2.200-1-3.500c2.800-1.800 4.700-4.800 4.700-8.100 0-5.500-5-9.800-11.300-9.800z" stroke="#1a1a1a" strokeWidth="1.300" />
            <g fill="#1a1a1a">
              <circle cx="10" cy="12" r="1.800" />
              <circle cx="19" cy="12" r="1.800" />
              <circle cx="24" cy="21" r="1.500" />
              <circle cx="31.500" cy="21" r="1.500" />
            </g>
          </g>
        </FooterItem>
      </div>
      <div className="ml-[247px] h-[10px] w-[274px] rounded-full bg-white" />
    </footer>
  );
}

export default function App() {
  return (
    <div className={`${SANS} h-[1663px] w-[768px] overflow-hidden bg-white whitespace-nowrap`}>
      <Header />
      <Quote />
      <News />
      <div className="h-[8px] bg-[#f4f4f4]" />
      <Tabs />
      <Legend />
      <div className="flex h-[975px] pl-[7px]">
        <div className="w-[488px]">
          <ChartPanel />
          <DateAxis />
          <VolumePanel
            className="h-[186px]"
            name="成交额"
            data={turnover}
            top={1101}
            offset={980}
            gridY={1214.7}
            axis="108.09亿"
            col="w-[142px]"
            items={['额:179.32亿', 'MA5:143.24亿', '10:122.16亿', '换手:35.77%']}
          />
          <VolumePanel
            className="mt-[11px] h-[186px]"
            name="成交量"
            data={volume}
            top={1298}
            offset={1290}
            gridY={1412.7}
            axis="373.18万"
            col="w-[150px]"
            items={['量:568.43万', 'MA5:482.39万', '10:464.48万', '换手:35.77%']}
          />
        </div>
        <ChipPanel />
      </div>
      <div className="h-[8px] bg-[#f4f4f4]" />
      <Footer />
    </div>
  );
}
